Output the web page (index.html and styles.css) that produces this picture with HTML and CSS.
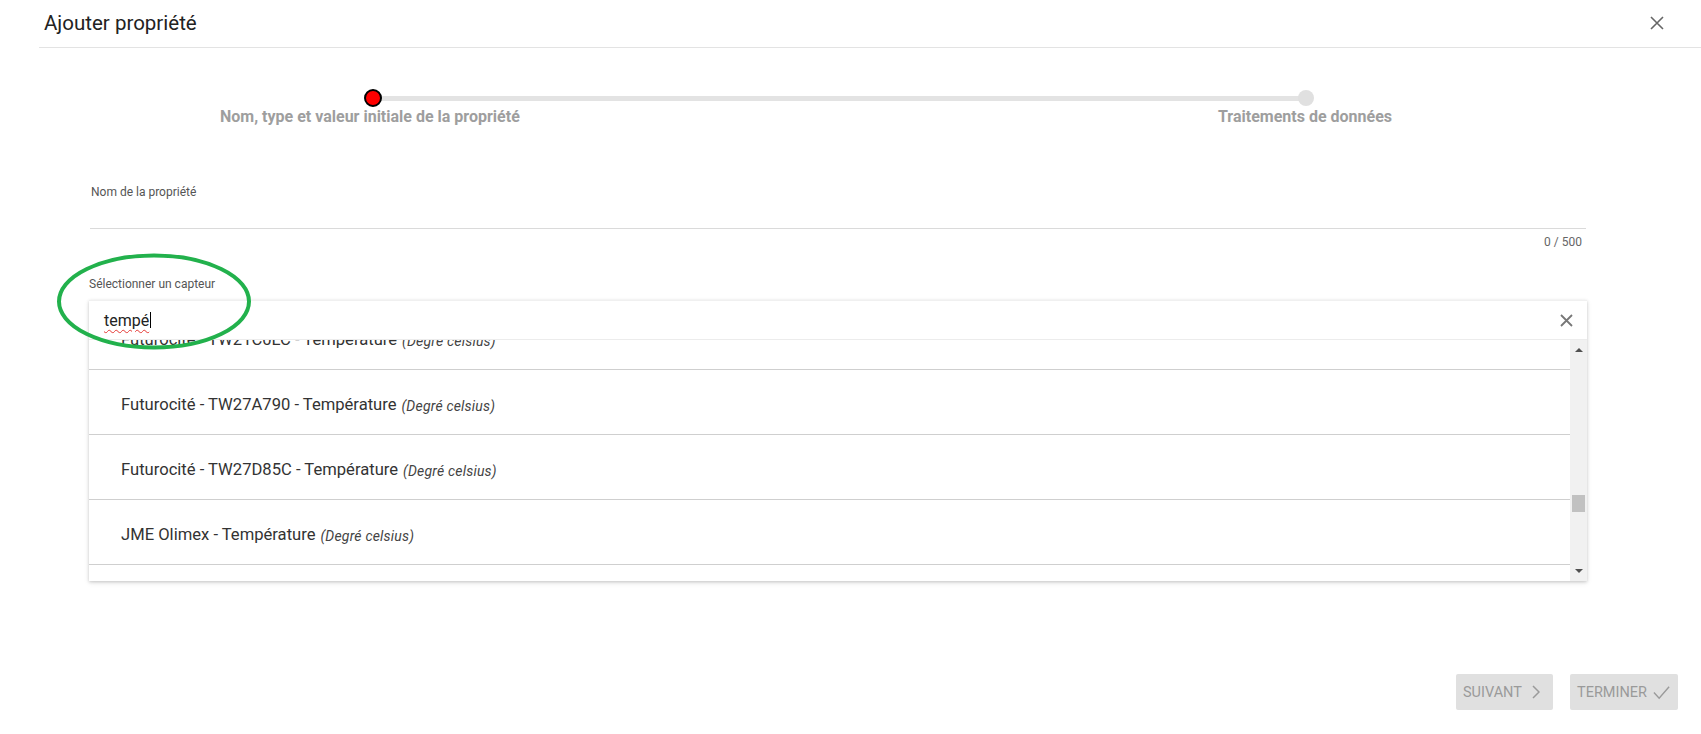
FILE: index.html
```html
<!DOCTYPE html>
<html lang="fr">
<head>
<meta charset="utf-8">
<title>Ajouter propriété</title>
<link rel="stylesheet" href="styles.css">
</head>
<body>
<div class="dialog">
  <header class="header">
    <h1 class="title">Ajouter propriété</h1>
    <button class="close" aria-label="Fermer">
      <svg width="14" height="14" viewBox="0 0 14 14"><path d="M1 1L13 13M13 1L1 13" stroke="#666" stroke-width="1.6" fill="none"/></svg>
    </button>
  </header>

  <div class="stepper">
    <div class="track">
      <span class="dot dot-active"></span>
      <span class="line"></span>
      <span class="dot dot-next"></span>
    </div>
    <div class="step-labels">
      <span class="step-label">Nom, type et valeur initiale de la propriété</span>
      <span class="step-label">Traitements de données</span>
    </div>
  </div>

  <div class="form">
    <div class="field">
      <label class="field-label">Nom de la propriété</label>
      <div class="field-input"></div>
      <div class="counter">0 / 500</div>
    </div>

    <div class="field">
      <label class="field-label">Sélectionner un capteur</label>
      <div class="combo">
        <div class="combo-input">
          <span class="typed">tempé</span><span class="caret"></span>
          <span class="spacer"></span>
          <svg class="clear" width="13" height="13" viewBox="0 0 13 13"><path d="M1 1L12 12M12 1L1 12" stroke="#777" stroke-width="1.8" fill="none"/></svg>
        </div>
        <div class="dropdown">
          <div class="list-viewport">
            <ul class="list">
              <li class="item">Futurocité - TW21C0LC - Température <em>(Degré celsius)</em></li>
              <li class="item">Futurocité - TW27A790 - Température <em>(Degré celsius)</em></li>
              <li class="item">Futurocité - TW27D85C - Température <em>(Degré celsius)</em></li>
              <li class="item">JME Olimex - Température <em>(Degré celsius)</em></li>
              <li class="item">JME Olimex - Température extérieure <em>(Degré celsius)</em></li>
            </ul>
          </div>
          <div class="scrollbar">
            <span class="arrow arrow-up"></span>
            <span class="thumb-area"><span class="thumb"></span></span>
            <span class="arrow arrow-down"></span>
          </div>
        </div>
      </div>
    </div>
  </div>

  <div class="footer">
    <button class="btn">SUIVANT
      <svg width="8" height="14" viewBox="0 0 8 14"><path d="M1 1L7 7L1 13" stroke="#9a9a9a" stroke-width="1.5" fill="none"/></svg>
    </button>
    <button class="btn">TERMINER
      <svg width="18" height="15" viewBox="0 0 18 15"><path d="M1 7.5L6.5 13.5L17 1.5" stroke="#9a9a9a" stroke-width="1.5" fill="none"/></svg>
    </button>
  </div>

  <svg class="annotation" width="196" height="97" viewBox="0 0 196 97">
    <ellipse cx="98" cy="48.5" rx="95" ry="46" fill="none" stroke="#22b14c" stroke-width="4"/>
  </svg>
</div>
</body>
</html>
```

FILE: styles.css
```css
* { box-sizing: border-box; }
html, body { margin: 0; padding: 0; background: #fff; }
body { font-family: Roboto, "Noto Sans", "Liberation Sans", sans-serif; color: #212121; }

.dialog { position: relative; width: 1701px; height: 734px; overflow: hidden; }

.header {
  margin-left: 39px;
  height: 48px;
  border-bottom: 1px solid #e3e3e3;
  display: flex;
  align-items: center;
  justify-content: space-between;
  padding: 0 37px 0 5px;
}
.title { margin: 0; font-size: 20.5px; font-weight: 400; color: #222; line-height: 24px; padding-bottom: 1px; }
.close { border: 0; background: none; padding: 0; width: 14px; height: 14px; display: flex; margin-bottom: 1px; }

.stepper { margin-top: 41px; }
.track { display: flex; align-items: center; margin-left: 364px; width: 950px; }
.dot { display: block; border-radius: 50%; flex: none; }
.dot-active { width: 18px; height: 18px; background: #ff0000; border: 2px solid #000; position: relative; z-index: 1; }
.dot-next { width: 16px; height: 16px; background: #e0e0e0; margin-left: -8px; }
.line { flex: 1; height: 5px; background: #e3e3e3; margin-left: -9px; }
.step-labels { display: flex; justify-content: space-between; margin-left: 220px; width: 1172px; margin-top: 1px; }
.step-label { font-size: 16px; font-weight: 700; color: #9e9e9e; line-height: 18px; }

.form { margin-left: 89px; width: 1498px; margin-top: 58px; }
.field-label { display: block; font-size: 12px; color: #555; line-height: 16px; padding-left: 2px; }
.field-input { height: 29px; border-bottom: 1px solid #dadada; margin-left: 1px; margin-right: 1px; }
.counter { text-align: right; font-size: 12px; color: #666; line-height: 14px; margin-top: 6px; padding-right: 5px; }
.field + .field { margin-top: 27px; }
.field + .field .field-label { padding-left: 0; }

.combo { margin-top: 8px; box-shadow: 0 1px 3px rgba(0,0,0,0.18), 0 2px 6px rgba(0,0,0,0.08); }
.combo-input {
  height: 40px; display: flex; align-items: center;
  padding: 0 14px 0 15px;
  border-top: 1px solid #f0f0f0;
  border-bottom: 1px solid #ececec;
}
.typed { font-size: 16px; color: #222; text-decoration: underline wavy #e53935; text-decoration-thickness: 1px; text-underline-offset: 3px; }
.caret { width: 1px; height: 16px; background: #000; margin-left: 1px; }
.spacer { flex: 1; }
.clear { display: block; }

.dropdown { display: flex; height: 241px; }
.list-viewport { flex: 1; overflow: hidden; }
.list { list-style: none; margin: -35px 0 0 0; padding: 0; }
.item {
  height: 65px; display: flex; align-items: center;
  padding-left: 32px; padding-top: 5px;
  border-bottom: 1px solid #cfcfcf;
  font-size: 16.6px; color: #333; white-space: nowrap;
}
.item em { font-size: 14px; color: #444; margin-left: 5px; padding-top: 2px; letter-spacing: 0.2px; }

.scrollbar { width: 17px; background: #f1f1f1; display: flex; flex-direction: column; align-items: center; }
.arrow { width: 0; height: 0; border-left: 4px solid transparent; border-right: 4px solid transparent; flex: none; }
.arrow-up { border-bottom: 4px solid #505050; margin-top: 8px; }
.arrow-down { border-top: 4px solid #505050; margin-bottom: 8px; }
.thumb-area { flex: 1; width: 100%; position: relative; }
.thumb { display: block; width: 13px; height: 17px; background: #c1c1c1; margin: 143px auto 0; }

.footer { display: flex; justify-content: flex-end; gap: 17px; margin-top: 93px; padding-right: 23px; }
.btn {
  height: 36px; border: 0; border-radius: 2px; background: #e0e0e0;
  color: #9a9a9a; font-family: inherit; font-size: 14.5px; letter-spacing: 0;
  display: flex; align-items: center; gap: 12px; padding: 0 8px;
}
.btn:first-child { width: 97px; padding-left: 7px; gap: 10px; }
.btn:last-child { width: 108px; padding-left: 7px; gap: 6px; }

.annotation { position: absolute; left: 56px; top: 253px; }
```
